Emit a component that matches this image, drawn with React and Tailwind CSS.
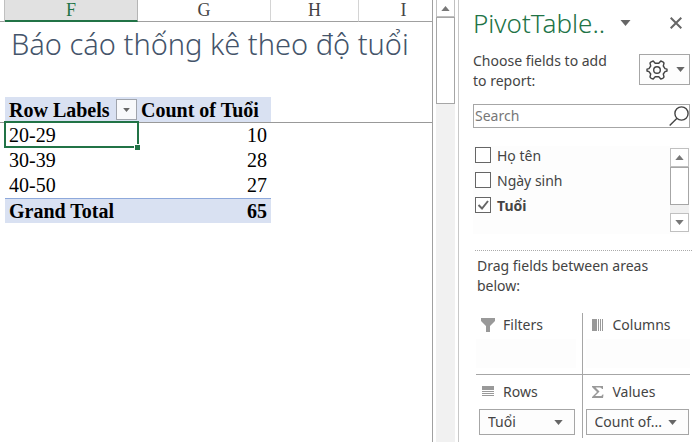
import React, { useState } from 'react';

const rows = [
    { label: '20-29', count: 10 },
    { label: '30-39', count: 28 },
    { label: '40-50', count: 27 }
];

const Arrow = ({ up = false, className = '' }) => (
    <svg viewBox="0 0 10 6" aria-hidden="true" className={className} fill="currentColor">
        <path d={up ? 'M5 0L10 6H0z' : 'M0 0H10L5 6z'} />
    </svg>
);

const Sheet = () => (
    <table className="w-full table-fixed border-separate border-spacing-0 font-['Liberation_Serif',serif] text-xl leading-6 text-black">
        <colgroup>
            <col className="w-[5px]" />
            <col className="w-[133px]" />
            <col className="w-[133px]" />
            <col className="w-[88px]" />
            <col />
        </colgroup>
        <thead className="text-lg leading-5 text-[#444]">
            <tr className="h-[22px] align-top">
                <td className="border-b border-r border-b-[#a0a0a0] border-r-[#c0c0c0] p-0"></td>
                <th className="border-b-2 border-r border-b-[#217346] border-r-[#b5b5b5] bg-[#e1e1e1] p-0 font-normal text-[#217346]">F</th>
                <th className="border-b border-r border-b-[#a0a0a0] border-r-[#d4d4d4] p-0 font-normal">G</th>
                <th className="border-b border-r border-b-[#a0a0a0] border-r-[#d4d4d4] p-0 font-normal">H</th>
                <th className="border-b border-[#a0a0a0] p-0 pl-4 font-normal">I</th>
            </tr>
        </thead>
        <tbody>
            <tr className="h-[75px]">
                <td className="p-0"></td>
                <td colSpan={4} className="whitespace-nowrap p-0 pl-1.5 align-top font-['Noto_Sans',sans-serif] text-[29px] font-light leading-[44px] text-[#44546a]">
                    Báo cáo thống kê theo độ tuổi
                </td>
            </tr>
            <tr className="h-[26px] font-bold">
                <td className="border-b border-[#999] p-0"></td>
                <td className="border-b border-[#999] bg-[#d9e1f2] p-0 pl-1">
                    <div className="flex items-center justify-between whitespace-nowrap">
                        Row Labels
                        <button aria-label="Filter row labels" className="mr-px flex h-[21px] w-[21px] items-center justify-center border border-[#a0a4ac] bg-[#f8f9fb] text-[#666]">
                            <Arrow className="h-1 w-[7px]" />
                        </button>
                    </div>
                </td>
                <td className="whitespace-nowrap border-b border-[#999] bg-[#d9e1f2] p-0 pl-[3px]">Count of Tuổi</td>
                <td className="border-b border-[#999] p-0"></td>
                <td className="border-b border-[#999] p-0"></td>
            </tr>
            {rows.map((row, idx) => (
                <tr key={row.label} className="h-[25px] align-top">
                    <td className="p-0"></td>
                    <td className="relative p-0 pl-1">
                        {row.label}
                        {/* active cell frame and fill handle */}
                        {idx === 0 && (
                            <>
                                <span className="absolute -inset-x-px -top-0.5 bottom-0 border-2 border-[#217346]"></span>
                                <span className="absolute -bottom-0.5 -right-0.5 h-1.5 w-1.5 border-l border-t border-white bg-[#217346]"></span>
                            </>
                        )}
                    </td>
                    <td className="p-0 pr-1 text-right">{row.count}</td>
                </tr>
            ))}
            <tr className="h-[25px] font-bold">
                <td className="p-0"></td>
                <td className="border-t border-[#8ea9db] bg-[#d9e1f2] p-0 pl-1">Grand Total</td>
                <td className="border-t border-[#8ea9db] bg-[#d9e1f2] p-0 pr-1 text-right">65</td>
            </tr>
        </tbody>
    </table>
);

const FieldList = () => {
    const [fields, setFields] = useState([
        { name: 'Họ tên', checked: false },
        { name: 'Ngày sinh', checked: false },
        { name: 'Tuổi', checked: true }
    ]);

    const toggle = (name) => {
        setFields(fields.map((f) => (f.name === name ? { ...f, checked: !f.checked } : f)));
    };

    return (
        <div className="mt-[18px] flex h-[88px] justify-between bg-[#fdfdfd]">
            <div className="flex flex-col pl-0.5">
                {fields.map((f) => (
                    <label key={f.name} className={f.checked ? 'flex h-[25px] items-start gap-1.5 font-bold' : 'flex h-[25px] items-start gap-1.5'}>
                        <span className="mt-px grid h-4 w-4">
                            <input
                                type="checkbox"
                                checked={f.checked}
                                onChange={() => toggle(f.name)}
                                className="col-start-1 row-start-1 h-4 w-4 appearance-none border border-[#666] bg-white"
                            />
                            {f.checked && (
                                <svg viewBox="0 0 16 16" className="pointer-events-none col-start-1 row-start-1 h-4 w-4" fill="none" stroke="#666" strokeWidth="2">
                                    <path d="M3.5 8L7 11.5L13 4" />
                                </svg>
                            )}
                        </span>
                        {f.name}
                    </label>
                ))}
            </div>
            <div className="mr-px mt-0.5 flex h-[84px] w-[19px] flex-col bg-[#f0f0f0] text-[#777]">
                <button aria-label="Scroll up" className="flex h-[19px] items-center justify-center border border-[#c0c0c0] bg-white">
                    <Arrow up className="h-[5px] w-[9px]" />
                </button>
                <div className="h-[38px] border border-[#a6a6a6] bg-white"></div>
                <button aria-label="Scroll down" className="mt-auto flex h-[19px] items-center justify-center border border-[#c0c0c0] bg-white">
                    <Arrow className="h-[5px] w-[9px]" />
                </button>
            </div>
        </div>
    );
};

const AreaSelect = ({ label, value }) => (
    <div className="mx-[3px] grid items-center">
        <select aria-label={label} className="col-start-1 row-start-1 h-[26px] w-full appearance-none border border-[#a6a6a6] bg-[#fdfdfd] pl-2 pr-5">
            <option>{value}</option>
        </select>
        <Arrow className="pointer-events-none col-start-1 row-start-1 mr-3 h-[5px] w-[9px] justify-self-end text-[#666]" />
    </div>
);

const AreaTitle = ({ icon, children }) => (
    <h3 className="flex h-6 items-center gap-2 pl-[5px]">
        <svg viewBox="0 0 14 14" className="h-3.5 w-3.5" fill="#999" aria-hidden="true">{icon}</svg>
        {children}
    </h3>
);

const PivotPane = () => (
    <aside className="w-60 shrink-0 border-l border-[#c8c8c8] pl-3.5 pr-2 font-['Noto_Sans',sans-serif] text-sm leading-5 text-[#444]">
        <header className="flex h-[46px] items-center justify-between">
            <h2 className="text-[26px] font-light leading-8 text-[#217346]">PivotTable..</h2>
            <button aria-label="Pane options" className="-ml-2 text-[#666]">
                <Arrow className="h-1.5 w-[11px]" />
            </button>
            <button aria-label="Close" className="ml-4 mr-2 text-[#666]">
                <svg viewBox="0 0 12 12" className="h-3 w-3" stroke="currentColor" strokeWidth="2">
                    <path d="M.7.7L11.3 11.3M11.3.7L.7 11.3" />
                </svg>
            </button>
        </header>

        <div className="mt-[5px] flex items-start justify-between">
            <p className="whitespace-nowrap">Choose fields to add<br />to report:</p>
            <button aria-label="Tools" className="mt-[3px] flex h-[31px] w-[51px] items-center justify-end gap-2 border border-[#a6a6a6] bg-[#fdfdfd] pr-1 text-[#666]">
                <svg viewBox="0 0 22 20" className="h-5 w-[22px]" fill="none" stroke="#444" strokeWidth="1.4" strokeLinejoin="round">
                    <path d="M5.2 1.8L7.2 1L9.2 3.2H12.8L14.8 1L16.8 1.8L18 3L17.3 6L19 8.6L21 9.2V11L19 11.6L17.3 14L18 17L16.8 18.4L14.8 19L12.8 16.8H9.2L7.2 19L5.2 18.4L4 17L4.7 14L3 11.6L1 11V9.2L3 8.6L4.7 6L4 3Z" />
                    <circle cx="11" cy="10" r="3.3" />
                </svg>
                <Arrow className="h-[5px] w-[9px]" />
            </button>
        </div>

        <div className="mt-[13px] flex h-6 items-center border border-[#a6a6a6]">
            <input type="search" aria-label="Search fields" placeholder="Search" className="w-full min-w-0 bg-transparent pl-px outline-none placeholder:text-[#777]" />
            <svg viewBox="0 0 20 20" className="h-5 w-5 shrink-0" fill="none" stroke="#444" strokeWidth="1.4" aria-hidden="true">
                <circle cx="12.5" cy="7.5" r="6.6" />
                <path d="M8 12.3L.7 19.5" />
            </svg>
        </div>

        <FieldList />

        <p className="-mr-0.5 ml-0.5 mt-4 whitespace-nowrap border-t border-dotted border-[#aaa] pl-0.5 pt-[5px]">
            Drag fields between areas<br />below:
        </p>

        <div className="ml-[3px] mt-[17px] grid grid-cols-[107fr_108fr]">
            <section className="h-[61px] border-r border-[#a6a6a6]">
                <AreaTitle icon={<path d="M0 0H14V3L9 8V14H5V8L0 3z" />}>Filters</AreaTitle>
                <div className="mr-1.5 mt-0.5 h-[29px] bg-[#fdfdfd]"></div>
            </section>
            <section className="pl-[3px]">
                <AreaTitle icon={<path d="M1 1H6V13H1zM7 1H8V13H7zM9 1H10V13H9zM11 1H12V13H11z" />}>Columns</AreaTitle>
                <div className="mt-0.5 h-[29px] bg-[#fdfdfd]"></div>
            </section>
            <section className="h-16 border-r border-t border-[#a6a6a6] pt-[5px]">
                <AreaTitle icon={<path d="M1 1H13V5H1zM1 6H13V7H1zM1 8H13V9H1zM1 10H13V11H1z" />}>Rows</AreaTitle>
                <div className="mt-[5px] pr-1">
                    <AreaSelect label="Rows" value="Tuổi" />
                </div>
            </section>
            <section className="border-t border-[#a6a6a6] pt-[5px]">
                <div className="pl-[3px]">
                    <AreaTitle icon={<path d="M1 1H12V4H11Q10.5 2.5 9 2.5H4.5L8.5 6.5L4 11H9.5Q11 11 11.5 9.5H12.5L12 13H1V12L6 7L1 2z" />}>Values</AreaTitle>
                </div>
                <div className="-mr-0.5 mt-[5px]">
                    <AreaSelect label="Values" value="Count of..." />
                </div>
            </section>
        </div>
    </aside>
);

const App = () => {
    return (
        <main className="flex min-h-screen bg-white">
            <div className="flex min-w-0 flex-1 items-stretch overflow-hidden">
                <div className="min-w-0 flex-1 border-r border-[#a0a0a0]">
                    <Sheet />
                </div>
                <div className="ml-[3px] mr-[3px] flex w-[19px] shrink-0 flex-col bg-[#f1f1f1] text-[#777]">
                    <button aria-label="Scroll sheet up" className="flex h-[17px] items-center justify-center border border-t-0 border-[#c0c0c0] bg-white">
                        <Arrow up className="h-[5px] w-[9px]" />
                    </button>
                    <div className="h-[87px] border border-[#a6a6a6] bg-white"></div>
                </div>
            </div>
            <PivotPane />
        </main>
    );
};

export default App;
